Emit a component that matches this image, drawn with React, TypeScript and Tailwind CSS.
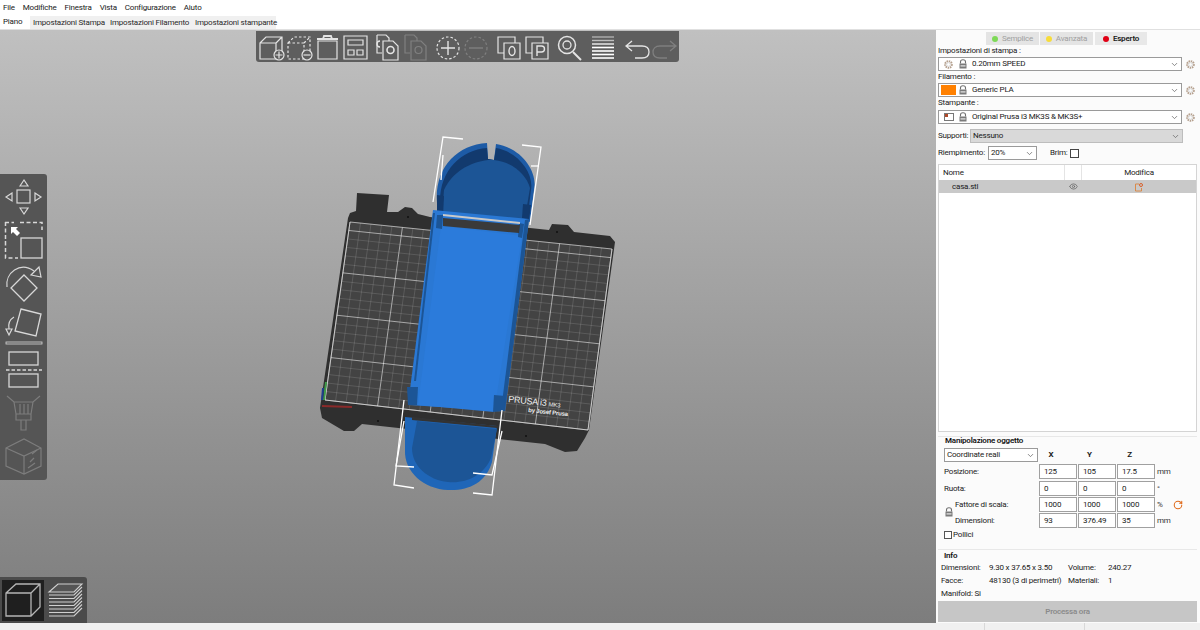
import React from 'react'
import { ChevronDown, Eye, RotateCw } from 'lucide-react'

type Pt = [number, number]

// bed grid corners in screen pixels
const TL: Pt = [350, 222]
const TR: Pt = [612, 249]
const BR: Pt = [588, 430]
const BL: Pt = [325, 400]

const bedPoint = (u: number, v: number): Pt => {
  const x = (1 - v) * ((1 - u) * TL[0] + u * TR[0]) + v * ((1 - u) * BL[0] + u * BR[0])
  const y = (1 - v) * ((1 - u) * TL[1] + u * TR[1]) + v * ((1 - u) * BL[1] + u * BR[1])
  return [x, y]
}

const BedGrid = () => {
  const lines: React.ReactNode[] = []
  for (let i = 0; i <= 25; i++) {
    const a = bedPoint(i / 25, 0)
    const b = bedPoint(i / 25, 1)
    lines.push(<line key={'v' + i} x1={a[0]} y1={a[1]} x2={b[0]} y2={b[1]} stroke="#fff" strokeOpacity={i % 5 === 0 ? 0.6 : 0.22} strokeWidth={i % 5 === 0 ? 0.9 : 0.6} />)
  }
  for (let i = 0; i <= 21; i++) {
    const a = bedPoint(0, i / 21)
    const b = bedPoint(1, i / 21)
    const major = (21 - i) % 5 === 0
    lines.push(<line key={'h' + i} x1={a[0]} y1={a[1]} x2={b[0]} y2={b[1]} stroke="#fff" strokeOpacity={major ? 0.6 : 0.22} strokeWidth={major ? 0.9 : 0.6} />)
  }
  return <g>{lines}</g>
}

const Scene = () => (
  <svg className="absolute inset-0 h-full w-full" viewBox="0 30 936 593">
    {/* bed */}
    <polygon fill="#2f2f2f" points="357,193 389,195 387,212 398,212 405,207 412,208 418,214 430,217 530,228 549,230 552,224 568,225 574,232 610,236 615,242 589,430 585,438 577,451 565,452 545,444 362,424 354,431 344,431 322,418 320,408 348,218 350,213 356,211" />
    <polygon fill="#434343" points="350,222 612,249 588,430 325,400" />
    <BedGrid />
    <polygon fill="none" stroke="#ddd" strokeOpacity="0.8" strokeWidth="0.8" points="350,222 612,249 588,430 325,400" />
    <line x1="322" y1="406" x2="352" y2="407" stroke="#8a2a2a" strokeWidth="2" />
    <line x1="326" y1="382" x2="324" y2="400" stroke="#3f9a4a" strokeWidth="2" />
    <line x1="323" y1="388" x2="322" y2="400" stroke="#1f3f8f" strokeWidth="2" />
    <circle cx="378" cy="421" r="1" fill="#111" />
    <circle cx="526" cy="436" r="1" fill="#111" />
    <circle cx="408" cy="217" r="1" fill="#111" />
    <circle cx="557" cy="232" r="1" fill="#111" />
    <text x="508" y="402" transform="rotate(6 508 402)" fontSize="9" fill="#eee" fontFamily="'Liberation Sans', sans-serif">PRUSA i3 <tspan fontSize="6">MK3</tspan></text>
    <text x="528" y="412" transform="rotate(6 528 412)" fontSize="6" fill="#eee" fontFamily="'Liberation Sans', sans-serif" fontWeight="700">by Josef Prusa</text>

    {/* bottom cup */}
    <path fill="#1f66b8" d="M405 417 L497 426 L492 462 C486 483 468 491 448 490 C424 489 404 472 405 450 Z" />
    <path fill="#1c5596" d="M417 421 L497 429 L491 458 C484 475 466 484 448 482 C428 480 412 466 412 448 Z" />
    <polygon fill="#333" points="412,417 498,426 497,428 412,420" />

    {/* top cup */}
    <path fill="#1d5ba6" d="M438 211 C431 172 454 145 487 143 L488 159 L494 160 L496 144 C522 148 538 172 534 190 L530 222 Z" />
    <path fill="#123a6e" d="M441 212 C435 176 458 150 487 148 L488 159 L494 160 L496 148 C519 152 534 174 531 190 L527 222 Z" />
    <path fill="#1c5596" d="M442 214 L444 190 C452 172 470 162 488 160 L494 160 C512 162 526 174 530 188 L524 224 Z" />
    <polygon fill="#123a6e" points="437,195 444,196 443,216 437,214" />
    <polygon fill="#123a6e" points="523,204 531,205 529,220 522,218" />

    {/* main body */}
    <polygon fill="#2a78d4" points="433,210 529,219 505,411 408,405" />
    <polygon fill="#2b7bdb" points="441,226 522,236 494,412 418,405" />
    <polygon fill="#1c5596" points="525,220 529,219 505,411 501,411" />
    <polygon fill="#1c5596" points="433,213 435,213 416,381 414,381" />
    <polygon fill="#1c5596" points="407,387 418,387 417,405 408,405" />
    <polygon fill="#1c5596" points="494,395 505,396 504,411 493,412" />
    <polygon fill="#1c5596" points="437,215 443,215 442,229 436,228" />
    <polygon fill="#1c5596" points="519,223 524,224 522,238 518,237" />
    <polygon fill="#3a3a3a" points="443,218 520,225 519,233 443,226" />
    <polygon fill="#c9c9c9" points="443,214 520,222 520,224 443,216" />

    {/* selection brackets */}
    <g fill="none" stroke="#fff" strokeWidth="1.3">
      <polyline points="463,139 443,137 433,202" />
      <polyline points="522,145 541,147 530,225" />
      <polyline points="443,155 441,180" />
      <polyline points="539,166 531,166" />
      <polyline points="404,400 394,485 414,488" />
      <polyline points="502,410 492,495 473,493" />
      <polyline points="404,421 396,466 414,467" />
      <polyline points="502,431 492,475 473,473" />
    </g>
  </svg>
)

const Ico = ({ children, w = 28 }: { children: React.ReactNode; w?: number }) => (
  <svg width={w} height={30} viewBox={`0 0 ${w} 30`} fill="none" stroke="#e4e4e4" strokeWidth="1.2" className="shrink-0">
    {children}
  </svg>
)

const TopToolbar = () => (
  <div className="absolute left-[256px] top-[1px] flex h-[31px] w-[423px] items-center rounded-b-[3px] bg-[#5e5e5e] pl-[1px]">
    <Ico>
      <path d="M3 11 L9 5 H25 V19 M3 11 H19 V27 H3 Z M19 11 L25 5" />
      <circle cx="22" cy="23" r="5" fill="#5e5e5e" />
      <path d="M22 19.5 V26.5 M18.5 23 H25.5" />
    </Ico>
    <Ico>
      <path d="M3 11 L9 5 H25 V19 M3 11 H19 V27 H3 Z M19 11 L25 5" strokeDasharray="2.5 2" />
      <circle cx="22" cy="23" r="5" fill="#5e5e5e" />
      <path d="M18.5 23 H25.5" />
    </Ico>
    <Ico>
      <path d="M5 9 H24 V27 H5 Z" />
      <path d="M4 7 H25 M10 7 L11 4 H18 L19 7" strokeWidth="1.8" />
    </Ico>
    <Ico>
      <path d="M3 4 H26 V27 H3 Z M7 8 H22 V13 H7 Z M7 18 H13 V23 H7 Z M16 18 H22 V23 H16 Z" />
    </Ico>
    <div className="w-[5px]" />
    <Ico>
      <path d="M3 3 H12 L15 6 V9 M3 3 V21 H8" />
      <path d="M9 9 H19 L24 14 V28 H9 Z" fill="#5e5e5e" />
      <circle cx="16.5" cy="18" r="3.5" strokeWidth="1.6" />
      <path d="M6 9 A3 3 0 1 0 6 15" strokeWidth="1.4" />
    </Ico>
    <Ico>
      <g opacity="0.25">
        <path d="M3 3 H12 L15 6 V9 M3 3 V21 H8" />
        <path d="M9 9 H19 L24 14 V28 H9 Z" />
        <circle cx="16.5" cy="18" r="3.5" />
      </g>
    </Ico>
    <div className="w-[4px]" />
    <Ico>
      <circle cx="14" cy="16" r="11" strokeDasharray="2.5 2" />
      <path d="M14 9 V23 M7 16 H21" strokeWidth="1.4" />
    </Ico>
    <Ico>
      <g opacity="0.25">
        <circle cx="14" cy="16" r="11" strokeDasharray="2.5 2" />
        <path d="M7 16 H21" strokeWidth="1.4" />
      </g>
    </Ico>
    <div className="w-[5px]" />
    <Ico>
      <path d="M9 21 H3 V5 H20 V11" />
      <path d="M9 11 H25 V27 H9 Z" />
      <ellipse cx="17" cy="19" rx="3" ry="4.5" strokeWidth="1.4" />
    </Ico>
    <Ico>
      <path d="M9 21 H3 V5 H20 V11" />
      <path d="M9 11 H25 V27 H9 Z" />
      <path d="M14 24 V14 H18.5 A2.8 2.8 0 0 1 18.5 20 H14" strokeWidth="1.4" />
    </Ico>
    <div className="w-[4px]" />
    <Ico>
      <circle cx="12" cy="13" r="8.5" strokeWidth="1.5" />
      <circle cx="12" cy="13" r="4" strokeWidth="1.3" />
      <path d="M18 20 L26 28" strokeWidth="2" />
    </Ico>
    <div className="w-[6px]" />
    <Ico>
      <g stroke="#fff">
        <path d="M3 5 H25" strokeOpacity="0.5" strokeWidth="1.4" />
        <path d="M3 8.5 H25" strokeOpacity="0.6" strokeWidth="1.4" />
        <path d="M3 12 H25" strokeOpacity="0.8" strokeWidth="1.6" />
        <path d="M3 15.5 H25" strokeWidth="1.6" />
        <path d="M3 19 H25" strokeWidth="1.6" />
        <path d="M3 22.5 H25" strokeWidth="1.6" />
        <path d="M3 26 H25" strokeWidth="1.6" />
      </g>
    </Ico>
    <div className="w-[6px]" />
    <Ico>
      <path d="M9 9 L3 14 L9 19 M3 14 H19 C24 14 26 17 26 20 C26 24 23 26 19 26 H12" strokeWidth="1.3" />
    </Ico>
    <Ico>
      <g opacity="0.25">
        <path d="M19 9 L25 14 L19 19 M25 14 H9 C4 14 2 17 2 20 C2 24 5 26 9 26 H16" strokeWidth="1.3" />
      </g>
    </Ico>
  </div>
)

const LeftToolbar = () => (
  <div className="absolute left-0 top-[144px] flex h-[306px] w-[47px] flex-col items-center rounded-r-[3px] bg-[#555555]">
    <svg width="47" height="306" viewBox="0 174 47 306" fill="none" stroke="#d8d8d8" strokeWidth="1.2">
      {/* move */}
      <rect x="17" y="190" width="13" height="13" />
      <path d="M20 186 L24 180 L28 186 Z M20 208 L24 214 L28 208 Z M12 193 L6 197 L12 201 Z M35 193 L41 197 L35 201 Z" />
      {/* scale */}
      <path d="M20 222.500 H42 V230 M5 222.500 H14 M5.500 222 V258 H18 M5.500 245 V236" strokeDasharray="4 2.500" strokeWidth="1.500" />
      <rect x="21" y="238" width="21" height="20" strokeWidth="1.300" />
      <path d="M11 227 H18 L16 229 L20 233 L17 236 L13 232 L11 234 Z" fill="#fff" stroke="none" />
      {/* rotate */}
      <path d="M7 287 C5 273 20 261 34 271" />
      <path d="M39 267 L41 277 L31 275 Z" />
      <path d="M24 275 L37 288 L24 301 L11 288 Z" strokeWidth="1.300" />
      {/* place on face */}
      <path d="M21 309 L41 314 L36 336 L15 331 Z" strokeWidth="1.300" />
      <path d="M14 317 C9 320 8 324 9 329" />
      <path d="M6 329 L12 329 L9 335 Z" />
      <rect x="6" y="342" width="36" height="2" strokeWidth="0.8" />
      {/* cut */}
      <rect x="9" y="352" width="29" height="13" strokeWidth="1.300" />
      <path d="M6 370 H42" strokeDasharray="3.500 2" strokeWidth="1.500" />
      <rect x="9" y="374" width="29" height="13" strokeWidth="1.300" />
      {/* seam brush */}
      <g opacity="0.3">
        <path d="M7 396 L14 402 H33 L40 396 M14 402 L16 414 H31 L33 402 M16 414 V420 H31 V414 M20 404 V414 M24 404 V414 M28 404 V414 M21 420 V430 H26 V420" />
      </g>
      {/* paint cube */}
      <g opacity="0.3">
        <path d="M6 448 L24 439 L41 448 V466 L24 474 L6 466 Z M6 448 L24 456 L41 448 M24 456 V474" />
        <path d="M30 462 L34 458 M28 468 L35 463 M32 454 L37 450" />
      </g>
    </svg>
  </div>
)

const ViewToggle = () => (
  <div className="absolute bottom-0 left-0 flex h-[46px] w-[87px] items-center rounded-tr-[3px] bg-[#4b4b4b] pl-[2px]">
    <div className="flex h-[41px] w-[42px] items-center justify-center bg-[#1f1f1f]">
      <svg width="38" height="36" viewBox="0 0 38 36" fill="none" stroke="#b5b5b5" strokeWidth="1.3">
        <path d="M2 11 L12 2 H36 V25 L27 34 H2 Z M2 11 H27 V34 M27 11 L36 2" />
      </svg>
    </div>
    <svg width="38" height="36" viewBox="0 0 38 36" fill="none" stroke="#d0d0d0" strokeWidth="1.1" className="ml-[2px]">
      <path d="M3 10 L12 2 H36 L28 10 Z" fill="#555" />
      <path d="M3 13 H28 L36 5 M3 16.500 H28 L36 8.500 M3 20 H28 L36 12 M3 23.500 H28 L36 15.500 M3 27 H28 L36 19 M3 30.500 H28 L36 22.500 M3 34 H28 L36 26" />
    </svg>
  </div>
)

const Gear = ({ size = 11 }: { size?: number }) => (
  <svg width={size} height={size} viewBox="0 0 12 12" fill="none" className="shrink-0">
    <circle cx="6" cy="6" r="3.600" stroke="#b5a08e" strokeWidth="2.200" strokeDasharray="1.600 0.800" />
    <circle cx="6" cy="6" r="2" stroke="#d8d8d8" strokeWidth="1" />
  </svg>
)

const LockIcon = ({ className = '' }: { className?: string }) => (
  <svg width="10" height="10" viewBox="0 0 10 10" fill="none" className={'shrink-0 ' + className}>
    <path d="M2.500 4.500 V2.800 C2.500 1.400 3.500 0.800 5 0.800 C6.500 0.800 7.500 1.400 7.500 2.800 V4.500" stroke="#6f6f6f" strokeWidth="1.100" />
    <rect x="1.500" y="4.500" width="7" height="5" fill="#7a7a7a" />
    <rect x="2.500" y="6.300" width="5" height="1.200" fill="#e8e8e8" />
  </svg>
)

const PresetRow = ({ icon, text }: { icon: React.ReactNode; text: string }) => (
  <div className="flex items-center pr-[3px]">
    <div className="flex h-[14px] w-[246px] items-center border border-[#9a9a9a] bg-white pr-[2px]">
      <div className="flex w-[19px] justify-center">{icon}</div>
      <LockIcon />
      <span className="ml-[4px] flex-1 text-[#1a1a1a]">{text}</span>
      <ChevronDown className="h-[9px] w-[9px] text-[#666]" />
    </div>
    <div className="ml-[1px] flex w-[14px] justify-center"><Gear /></div>
  </div>
)

const NumBox = ({ v }: { v: string }) => (
  <div className="flex h-[15px] w-[38px] items-center border border-[#a0a0a0] bg-white pl-[4px] text-[#1a1a1a]">{v}</div>
)

const TransformRow = ({ label, vals, unit, labelClass, extra }: { label: string; vals: string[]; unit: string; labelClass: string; extra?: React.ReactNode }) => (
  <div className="flex h-[15px] items-center">
    <span className={labelClass}>{label}</span>
    <div className="flex gap-[1px]">
      {vals.map((v, i) => <NumBox key={i} v={v} />)}
    </div>
    <span className="ml-[2px] w-[14px] text-[#333]">{unit}</span>
    {extra}
  </div>
)

const InfoRow = ({ a, b, c, d }: { a: string; b: string; c?: string; d?: string }) => (
  <div className="flex h-[13px] items-center text-[#222]">
    <span className="w-[48px]">{a}</span>
    <span className="w-[79px]">{b}</span>
    {c && <span className="w-[40px]">{c}</span>}
    {d && <span>{d}</span>}
  </div>
)

const Sidebar = () => (
  <aside className="flex w-[264px] flex-col bg-[#fbfbfb] pl-[2px] text-[#1a1a1a]">
    {/* mode */}
    <div className="ml-[48px] mt-[2px] flex h-[13px] gap-[1px]">
      <div className="flex w-[53px] items-center justify-center gap-[4px] bg-[#e4e4e4] text-[#a0a0a0]"><span className="h-[6px] w-[6px] rounded-full bg-[#7ed957]" />Semplice</div>
      <div className="flex w-[53px] items-center justify-center gap-[4px] bg-[#e4e4e4] text-[#a0a0a0]"><span className="h-[6px] w-[6px] rounded-full bg-[#f7dc3a]" />Avanzata</div>
      <div className="ml-[1px] flex w-[52px] items-center justify-center gap-[4px] bg-[#e8e8e8] font-semibold text-[#1a1a1a]"><span className="h-[6px] w-[6px] rounded-full bg-[#e00015]" />Esperto</div>
    </div>
    <div className="h-[12px] leading-[11px]">Impostazioni di stampa :</div>
    <PresetRow icon={<Gear />} text="0.20mm SPEED" />
    <div className="h-[12px] leading-[11px]">Filamento :</div>
    <PresetRow icon={<span className="h-[10px] w-[15px] bg-[#ff8000]" />} text="Generic PLA" />
    <div className="h-[13px] leading-[12px]">Stampante :</div>
    <PresetRow icon={<span className="relative h-[8px] w-[10px] border border-[#777] bg-white"><span className="absolute left-0 top-0 h-[3px] w-[3px] bg-[#b04a2a]" /></span>} text="Original Prusa i3 MK3S & MK3S+" />
    <div className="mt-[5px] flex h-[14px] items-center">
      <span className="w-[32px]">Supporti:</span>
      <div className="flex h-[14px] w-[213px] items-center justify-between border border-[#bdbdbd] bg-[#d9d9d9] px-[2px]">
        <span>Nessuno</span>
        <ChevronDown className="h-[9px] w-[9px] text-[#666]" />
      </div>
    </div>
    <div className="mt-[3px] flex h-[14px] items-center">
      <span className="w-[50px]">Riempimento:</span>
      <div className="flex h-[14px] w-[49px] items-center justify-between border border-[#9a9a9a] bg-white px-[2px]">
        <span>20%</span>
        <ChevronDown className="h-[9px] w-[9px] text-[#666]" />
      </div>
      <span className="ml-[13px]">Brim:</span>
      <span className="ml-[2px] h-[9px] w-[9px] border border-[#444] bg-white" />
    </div>

    {/* object list */}
    <div className="mr-[3px] mt-[4px] h-[268px] border border-[#d4d4d4] bg-white">
      <div className="grid h-[15px] grid-cols-[125px_18px_1fr] items-center">
        <span className="pl-[4px]">Nome</span>
        <span className="h-full border-x border-[#e4e4e4]" />
        <span className="text-center">Modifica</span>
      </div>
      <div className="grid h-[13px] grid-cols-[125px_18px_1fr] items-center bg-[#c9c9c9]">
        <span className="pl-[13px]">casa.stl</span>
        <Eye className="mx-auto h-[9px] w-[9px] text-[#666]" />
        <svg width="10" height="10" viewBox="0 0 10 10" fill="none" className="mx-auto">
          <path d="M5 2 H1.500 V9 H7.500 V6" stroke="#d98a4a" strokeWidth="1" />
          <circle cx="7" cy="3" r="1.500" stroke="#d9602a" strokeWidth="1" />
        </svg>
      </div>
    </div>

    {/* manipulation */}
    <div className="mr-[3px] mt-[4px] h-[113px] border-t border-[#e8e8e8] pl-[6px]">
      <div className="h-[11px] pl-[1px] font-semibold leading-[8px] text-[#111]">Manipolazione oggetto</div>
      <div className="flex h-[14px] items-center">
        <div className="flex h-[14px] w-[94px] items-center justify-between border border-[#9a9a9a] bg-white px-[2px]">
          <span>Coordinate reali</span>
          <ChevronDown className="h-[9px] w-[9px] text-[#666]" />
        </div>
        <div className="flex font-bold text-[#1a1a1a]">
          <span className="w-[26px] text-center">X</span>
          <span className="ml-[6px] w-[39px] text-center">Y</span>
          <span className="ml-[1px] w-[39px] text-center">Z</span>
        </div>
      </div>
      <div className="mt-[2px] flex flex-col gap-[1px]">
        <div className="flex flex-col gap-[2px]">
          <TransformRow label="Posizione:" vals={['125', '105', '17.5']} unit="mm" labelClass="w-[95px]" />
          <TransformRow label="Ruota:" vals={['0', '0', '0']} unit="°" labelClass="w-[95px]" />
        </div>
        <div className="relative flex flex-col gap-[1px]">
          <TransformRow label="Fattore di scala:" vals={['1000', '1000', '1000']} unit="%" labelClass="w-[95px] pl-[11px]" extra={<RotateCw className="ml-[2px] h-[10px] w-[10px] text-[#e06a1a]" strokeWidth={2.500} />} />
          <TransformRow label="Dimensioni:" vals={['93', '376.49', '35']} unit="mm" labelClass="w-[95px] pl-[11px]" />
          <LockIcon className="absolute left-0 top-[10px]" />
        </div>
      </div>
      <div className="flex h-[13px] items-center gap-[1px]">
        <span className="h-[8px] w-[8px] border border-[#555] bg-white" />
        <span>Pollici</span>
      </div>
    </div>

    {/* info */}
    <div className="mr-[3px] h-[52px] border-t border-[#e8e8e8] pl-[3px] pt-[1px]">
      <div className="h-[10px] pl-[3px] font-semibold leading-[10px] text-[#111]">Info</div>
      <InfoRow a="Dimensioni:" b="9.30 x 37.65 x 3.50" c="Volume:" d="240.27" />
      <InfoRow a="Facce:" b="48130 (3 di perimetri)" c="Materiali:" d="1" />
      <InfoRow a="Manifold: Si" b="" />
    </div>

    <div className="mr-[3px] flex h-[21px] items-center justify-center bg-[#c6c6c6] font-semibold text-[#8a8a8a]">Processa ora</div>
  </aside>
)

export default function App() {
  return (
    <div className="flex h-[630px] w-[1200px] flex-col overflow-hidden whitespace-nowrap bg-white font-['Roboto','Noto_Sans',sans-serif] text-[8px] tracking-[-0.2px]">
      <div className="flex h-[15px] items-center gap-[8px] pl-[3px] text-[#1a1a1a]">
        <span>File</span><span>Modifiche</span><span>Finestra</span><span>Vista</span><span>Configurazione</span><span>Aiuto</span>
      </div>
      <div className="flex h-[15px] items-end border-b border-[#e0e0e0]">
        <div className="flex h-[15px] w-[30px] items-center bg-white pl-[3px] text-[#1a1a1a]">Piano</div>
        <div className="flex h-[13px] items-center text-[#2a2a2a]">
          <span className="flex h-[13px] w-[78px] items-center bg-[#f0f0f0] pl-[3px]">Impostazioni Stampa</span>
          <span className="flex h-[13px] w-[85px] items-center bg-[#f0f0f0] pl-[2px]">Impostazioni Filamento</span>
          <span className="flex h-[13px] w-[83px] items-center bg-[#f0f0f0] pl-[2px]">Impostazioni stampante</span>
        </div>
      </div>
      <div className="flex h-[593px]">
        <main className="relative flex-1 bg-linear-to-b from-[#c0c0c0] to-[#7d7d7d]">
          <Scene />
          <TopToolbar />
          <LeftToolbar />
          <ViewToggle />
        </main>
        <Sidebar />
      </div>
      <div className="flex flex-1 bg-[#f0f0f0]">
        <div className="w-[985px] border-r border-[#d8d8d8]" />
        <div className="w-[100px] border-r border-[#d8d8d8]" />
      </div>
    </div>
  )
}
